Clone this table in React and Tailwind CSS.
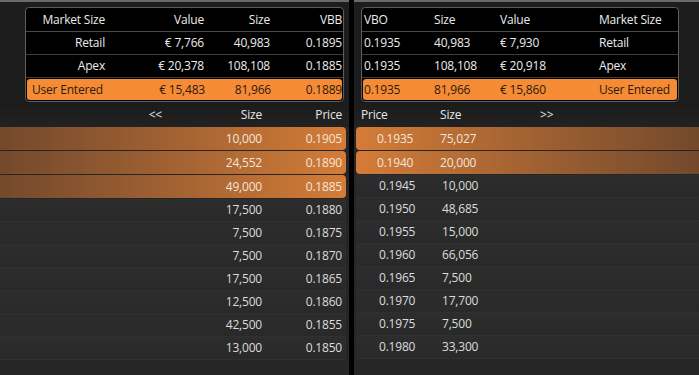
const summaryLeft = [
  { name: "Retail", value: "€ 7,766", size: "40,983", px: "0.1895" },
  { name: "Apex", value: "€ 20,378", size: "108,108", px: "0.1885" },
];
const summaryRight = [
  { name: "Retail", value: "€ 7,930", size: "40,983", px: "0.1935" },
  { name: "Apex", value: "€ 20,918", size: "108,108", px: "0.1935" },
];

const bids = [
  ["10,000", "0.1905", true],
  ["24,552", "0.1890", true],
  ["49,000", "0.1885", true],
  ["17,500", "0.1880"],
  ["7,500", "0.1875"],
  ["7,500", "0.1870"],
  ["17,500", "0.1865"],
  ["12,500", "0.1860"],
  ["42,500", "0.1855"],
  ["13,000", "0.1850"],
];
const offers = [
  ["0.1935", "75,027", true],
  ["0.1940", "20,000", true],
  ["0.1945", "10,000"],
  ["0.1950", "48,685"],
  ["0.1955", "15,000"],
  ["0.1960", "66,056"],
  ["0.1965", "7,500"],
  ["0.1970", "17,700"],
  ["0.1975", "7,500"],
  ["0.1980", "33,300"],
];

function BidRow({ size, price, hot }) {
  if (hot) {
    return (
      <div className="h-[23px] mb-px flex items-center rounded-r-[4px] bg-gradient-to-r from-[#73492c] to-[#d47c37] text-[#f2e6dc]">
        <span className="w-[262px] text-right">{size}</span>
        <span className="w-[80px] text-right">{price}</span>
      </div>
    );
  }
  return (
    <div className="h-[23px] flex items-center border-b border-[#303030] bg-gradient-to-b from-[#2d2d2d] to-[#292929] text-[#dcdcdc]">
      <span className="w-[262px] text-right">{size}</span>
      <span className="w-[80px] text-right">{price}</span>
    </div>
  );
}

function OfferRow({ price, size, hot }) {
  if (hot) {
    return (
      <div className="h-[23px] mb-px flex items-center rounded-l-[4px] bg-gradient-to-r from-[#d47c37] to-[#73492c] text-[#f2e6dc]">
        <span className="w-[84px] pl-[21px]">{price}</span>
        <span className="w-[100px]">{size}</span>
      </div>
    );
  }
  return (
    <div className="h-[23px] flex items-center border-b border-[#303030] bg-gradient-to-b from-[#2d2d2d] to-[#292929] text-[#dcdcdc]">
      <span className="w-[86px] pl-[23px]">{price}</span>
      <span className="w-[100px]">{size}</span>
    </div>
  );
}

export default function App() {
  return (
    <div className="w-[699px] h-[375px] overflow-hidden flex bg-black text-[12px] leading-none font-['Open_Sans',sans-serif] tracking-[-0.2px]">
      {/* left side: bids */}
      <div className="w-[349px] flex flex-col bg-[#1d1d1d] border-t-2 border-[#6a6a6a]">
        <div className="h-[100px] pt-[5px] pl-[25px]">
          <div className="w-[319px] border border-[#5c5c5c] rounded-[4px] bg-black text-[#ececec] overflow-hidden">
            <div className="h-[24px] grid grid-cols-[79px_99px_66px_72px] items-center text-right border-b border-[#4a4a4a]">
              <span>Market Size</span>
              <span>Value</span>
              <span>Size</span>
              <span>VBB</span>
            </div>
            {summaryLeft.map((r) => (
              <div key={r.name} className="h-[23px] grid grid-cols-[79px_99px_66px_72px] items-center text-right border-b border-[#3c3c3c]">
                <span>{r.name}</span>
                <span>{r.value}</span>
                <span>{r.size}</span>
                <span>{r.px}</span>
              </div>
            ))}
            <div className="h-[21px] m-px rounded-[3px] bg-[#f68b35] text-[#2b1b0d] grid grid-cols-[79px_99px_66px_71px] items-center text-right">
              <span className="text-left pl-[5px] whitespace-nowrap">User Entered</span>
              <span className="-ml-px">€ 15,483</span>
              <span>81,966</span>
              <span>0.1889</span>
            </div>
          </div>
        </div>
        <div className="h-[25px] flex items-center bg-gradient-to-b from-[#1b1b1b] to-[#222222] text-[#e6e6e6]">
          <span className="w-[162px] text-right">&lt;&lt;</span>
          <span className="w-[100px] text-right">Size</span>
          <span className="w-[80px] text-right">Price</span>
        </div>
        <div className="flex-1 flex flex-col pr-[3px] bg-[#262626]">
          {bids.map(([s, p, h], i) => (
            <BidRow key={i} size={s} price={p} hot={h} />
          ))}
        </div>
      </div>

      <div className="w-[5px]" />

      {/* right side: offers */}
      <div className="flex-1 flex flex-col bg-[#1d1d1d] border-t-2 border-[#6a6a6a]">
        <div className="h-[100px] pt-[5px] pl-[7px]">
          <div className="w-[318px] border border-[#5c5c5c] rounded-[4px] bg-black text-[#ececec] overflow-hidden">
            <div className="h-[24px] grid grid-cols-[70px_66px_99px_79px] items-center border-b border-[#4a4a4a] pl-[2px]">
              <span>VBO</span>
              <span>Size</span>
              <span>Value</span>
              <span>Market Size</span>
            </div>
            {summaryRight.map((r) => (
              <div key={r.name} className="h-[23px] grid grid-cols-[70px_66px_99px_79px] items-center border-b border-[#3c3c3c] pl-[2px]">
                <span>{r.px}</span>
                <span>{r.size}</span>
                <span>{r.value}</span>
                <span>{r.name}</span>
              </div>
            ))}
            <div className="h-[21px] m-px rounded-[3px] bg-[#f68b35] text-[#2b1b0d] grid grid-cols-[70px_66px_99px_78px] items-center pl-px">
              <span>0.1935</span>
              <span>81,966</span>
              <span>€ 15,860</span>
              <span className="whitespace-nowrap">User Entered</span>
            </div>
          </div>
        </div>
        <div className="h-[25px] flex items-center bg-gradient-to-b from-[#1b1b1b] to-[#222222] text-[#e6e6e6]">
          <span className="w-[86px] pl-[7px]">Price</span>
          <span className="w-[100px]">Size</span>
          <span>&gt;&gt;</span>
        </div>
        <div className="flex-1 flex flex-col pl-[2px] bg-[#262626]">
          {offers.map(([p, s, h], i) => (
            <OfferRow key={i} price={p} size={s} hot={h} />
          ))}
        </div>
      </div>
    </div>
  );
}
